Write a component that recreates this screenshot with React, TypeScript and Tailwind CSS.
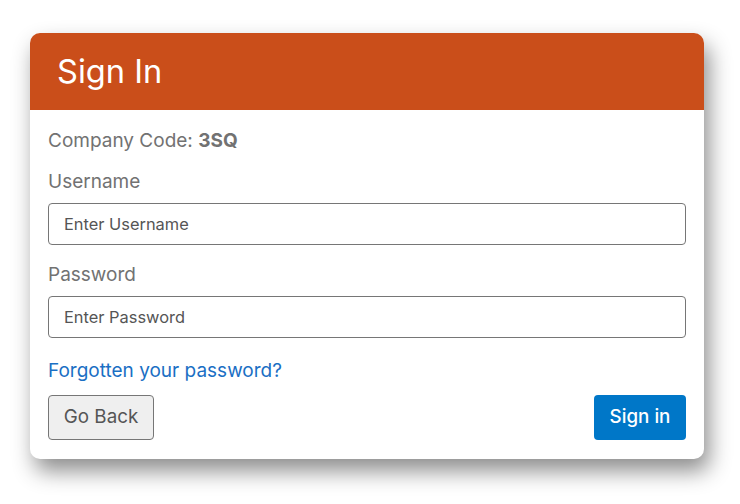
export default function App() {
  return (
    <div className="min-h-[504px] w-[740px] bg-white pt-[33px] pl-[30px]" style={{ fontFamily: 'Inter, "Noto Sans", sans-serif' }}>
      <div className="w-[674px] overflow-hidden rounded-[10px] bg-white shadow-[5px_12px_22px_rgba(0,0,0,0.45)]">
        <div className="flex h-[77px] items-center bg-[#ca4e1a] px-[27px]">
          <h1 className="text-[32.6px] leading-none text-white">Sign In</h1>
        </div>
        <div className="flex flex-col px-[18px] pt-[17px] pb-[19px] text-[19px] text-[#727272]">
          <div className="leading-[28px]">
            Company Code: <span className="font-bold">3SQ</span>
          </div>
          <label className="mt-[13px] leading-[28px]">Username</label>
          <input
            className="mt-[7px] h-[42px] rounded-[4px] border border-[#767676] px-[15px] text-[16.4px] text-[#333] placeholder:text-[#555] outline-none"
            placeholder="Enter Username"
          />
          <label className="mt-[16px] leading-[28px]">Password</label>
          <input
            type="password"
            className="mt-[7px] h-[42px] rounded-[4px] border border-[#767676] px-[15px] text-[16.4px] text-[#333] placeholder:text-[#555] outline-none"
            placeholder="Enter Password"
          />
          <a className="mt-[19px] leading-[28px] text-[#1a6fc4]" href="#">
            Forgotten your password?
          </a>
          <div className="mt-[10px] flex items-center justify-between">
            <button className="h-[45px] w-[106px] rounded-[4px] border border-[#767676] bg-[#efefef] text-[18.8px] text-[#555]">
              Go Back
            </button>
            <button className="h-[45px] w-[92px] rounded-[4px] bg-[#0077c8] text-[18.8px] font-medium text-white">
              Sign in
            </button>
          </div>
        </div>
      </div>
    </div>
  );
}
